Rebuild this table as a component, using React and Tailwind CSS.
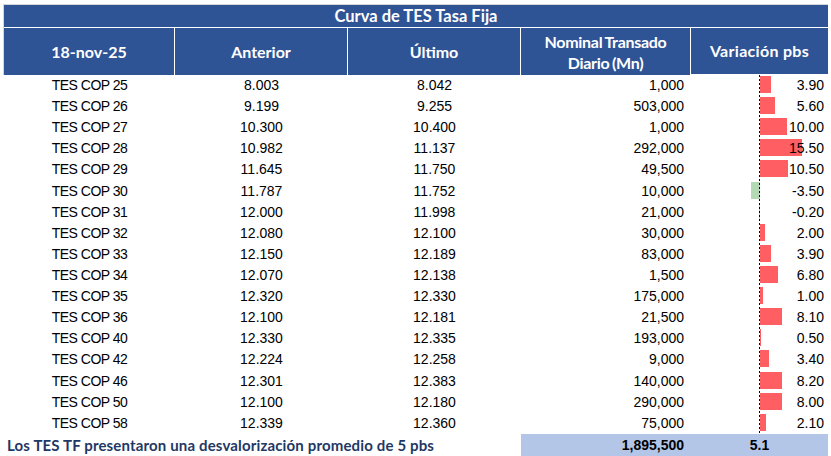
import React from "react";

const rows = [
  ["TES COP 25", "8.003", "8.042", "1,000", 3.9],
  ["TES COP 26", "9.199", "9.255", "503,000", 5.6],
  ["TES COP 27", "10.300", "10.400", "1,000", 10.0],
  ["TES COP 28", "10.982", "11.137", "292,000", 15.5],
  ["TES COP 29", "11.645", "11.750", "49,500", 10.5],
  ["TES COP 30", "11.787", "11.752", "10,000", -3.5],
  ["TES COP 31", "12.000", "11.998", "21,000", -0.2],
  ["TES COP 32", "12.080", "12.100", "30,000", 2.0],
  ["TES COP 33", "12.150", "12.189", "83,000", 3.9],
  ["TES COP 34", "12.070", "12.138", "1,500", 6.8],
  ["TES COP 35", "12.320", "12.330", "175,000", 1.0],
  ["TES COP 36", "12.100", "12.181", "21,500", 8.1],
  ["TES COP 40", "12.330", "12.335", "193,000", 0.5],
  ["TES COP 42", "12.224", "12.258", "9,000", 3.4],
  ["TES COP 46", "12.301", "12.383", "140,000", 8.2],
  ["TES COP 50", "12.100", "12.180", "290,000", 8.0],
  ["TES COP 58", "12.339", "12.360", "75,000", 2.1],
];

const SCALE = 2.7;
const AXIS = 68;

function Bar({ v }) {
  if (v >= 0) {
    return (
      <div
        className="absolute top-[1px] h-[17px] bg-[#ff5f63]"
        style={{ left: AXIS + 1, width: Math.max(1, v * SCALE) }}
      />
    );
  }
  const w = Math.max(1, -v * SCALE);
  return (
    <div
      className="absolute top-[1px] h-[17px] bg-[#b3dab5]"
      style={{ left: AXIS + 1 - w, width: w }}
    />
  );
}

export default function App() {
  const head = "font-['Lato','Open_Sans',sans-serif] font-bold text-white";
  const cell = "font-['Liberation_Sans',Arial,sans-serif] text-[14px] text-black";
  return (
    <div className="w-[831px] h-[456px] bg-white overflow-hidden">
      <div className="mt-[4px] ml-[3px] w-[825px] border-t border-l border-[#d6d6d6] bg-white">
        <div className={`h-[22px] bg-[#2f5496] flex items-center justify-center text-[16.5px] ${head}`}>
          Curva de TES Tasa Fija
        </div>
        <div className="h-px bg-white" />
        <div className="grid grid-cols-[170px_172px_172px_169px_137px] gap-x-px h-[47px] bg-white">
          <div className={`bg-[#2f5496] flex items-center justify-center text-[16px] ${head}`}>18-nov-25</div>
          <div className={`bg-[#2f5496] flex items-center justify-center text-[16px] ${head}`}>Anterior</div>
          <div className={`bg-[#2f5496] flex items-center justify-center text-[16px] ${head}`}>Último</div>
          <div className={`bg-[#2f5496] flex flex-col items-center justify-center text-[16px] leading-[21px] ${head}`}>
            <span className="tracking-[-0.3px] [word-spacing:-1px]">Nominal Transado</span>
            <span className="tracking-[-0.3px] [word-spacing:-1px]">Diario (Mn)</span>
          </div>
          <div className={`bg-[#2f5496] flex items-center justify-center text-[16px] tracking-[0.3px] mb-[1px] ${head}`}>Variación pbs</div>
        </div>
      </div>
      <div className="relative ml-[4px] w-[824px]">
        <div className="absolute left-[755px] top-0 w-px h-[359px] bg-[repeating-linear-gradient(to_bottom,#000_0px,#000_2px,transparent_2px,transparent_4px)] z-10" />
        {rows.map((r) => (
          <div key={r[0]} className={`grid grid-cols-[171px_173px_173px_170px_137px] h-[21.12px] items-center ${cell}`}>
            <div className="text-center tracking-[-0.5px]">{r[0]}</div>
            <div className="text-center">{r[1]}</div>
            <div className="text-center">{r[2]}</div>
            <div className="text-right pr-[7px]">{r[3]}</div>
            <div className="relative h-full flex items-center justify-end pr-[4px]">
              <Bar v={r[4]} />
              <span className="relative z-20">{r[4].toFixed(2)}</span>
            </div>
          </div>
        ))}
        <div className="grid grid-cols-[171px_173px_173px_170px_137px] h-[22px] items-stretch">
          <div className="col-span-3 flex items-center pl-[3px] whitespace-nowrap font-['Lato','Open_Sans',sans-serif] font-bold text-[15px] tracking-[0.15px] text-[#1f3864]">
            Los TES TF presentaron una desvalorización promedio de 5 pbs
          </div>
          <div className={`bg-[#b4c6e7] flex items-center justify-end pr-[7px] font-bold ${cell}`}>1,895,500</div>
          <div className={`bg-[#b4c6e7] flex items-center justify-center font-bold ${cell}`}>5.1</div>
        </div>
      </div>
    </div>
  );
}
